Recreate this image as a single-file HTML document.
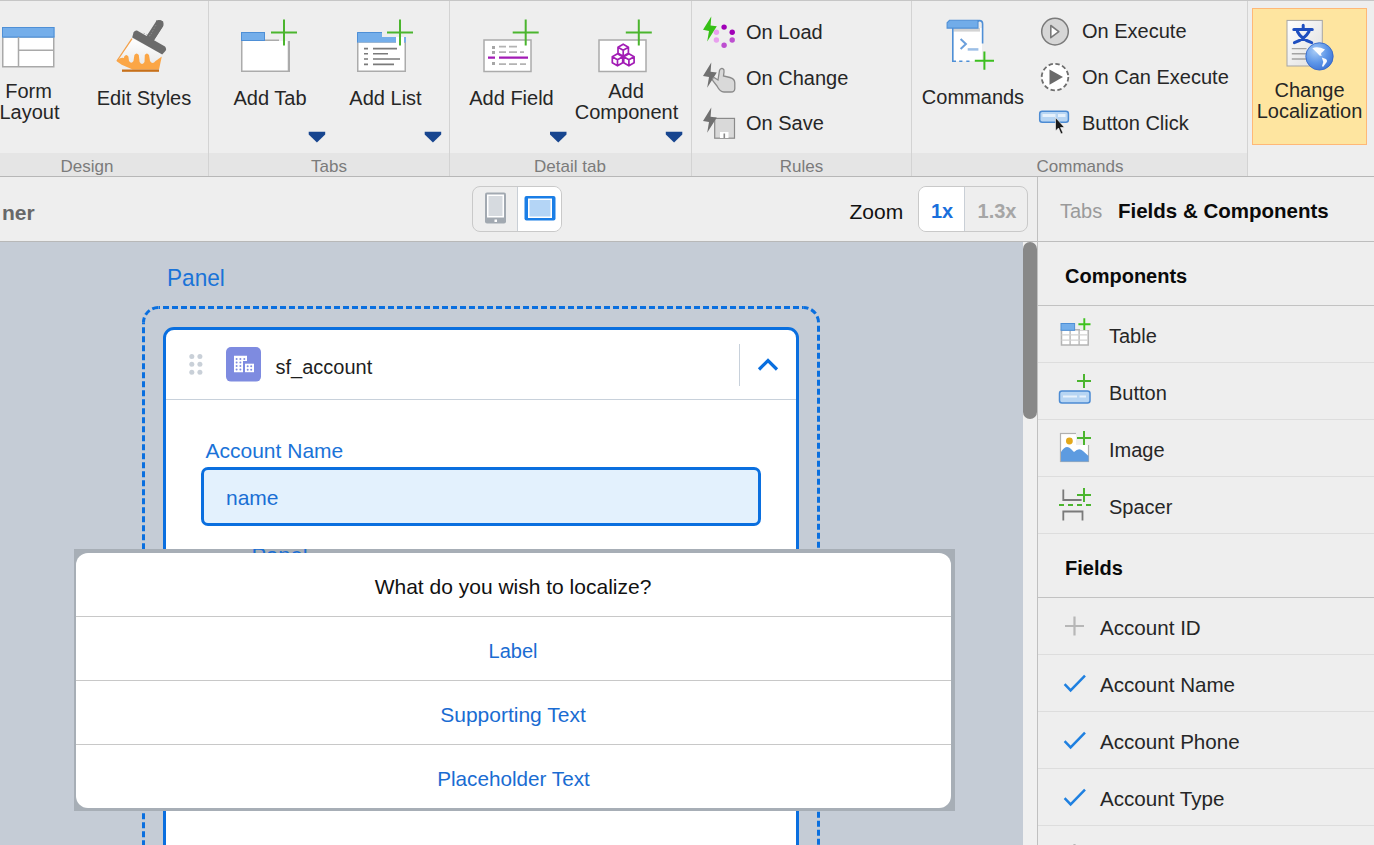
<!DOCTYPE html>
<html><head><meta charset="utf-8">
<style>
*{margin:0;padding:0;box-sizing:border-box;}
html,body{width:1374px;height:845px;overflow:hidden;background:#eeeeee;font-family:"Liberation Sans",sans-serif;position:relative;}
.a{position:absolute;}
.t{position:absolute;white-space:nowrap;}
svg{position:absolute;overflow:visible;}
</style></head><body>
<div class="a" style="left:0px;top:0px;width:1374px;height:177px;background:#eeeeee;"></div>
<div class="a" style="left:0px;top:0px;width:1374px;height:1px;background:#c6c6c6;"></div>
<div class="a" style="left:0px;top:153px;width:1247px;height:23px;background:#e5e5e5;"></div>
<div class="a" style="left:0px;top:176px;width:1374px;height:1px;background:#b7b7b7;"></div>
<div class="a" style="left:208px;top:1px;width:1px;height:175px;background:#d3d3d3;"></div>
<div class="a" style="left:449px;top:1px;width:1px;height:175px;background:#d3d3d3;"></div>
<div class="a" style="left:691px;top:1px;width:1px;height:175px;background:#d3d3d3;"></div>
<div class="a" style="left:911px;top:1px;width:1px;height:175px;background:#d3d3d3;"></div>
<div class="a" style="left:1247px;top:1px;width:1px;height:175px;background:#d3d3d3;"></div>
<div class="a" style="left:1252px;top:8px;width:115px;height:137px;background:#fee5a0;border:1px solid #ffb877;"></div>
<div class="t" style="left:28.5px;transform:translateX(-50%);top:81.1px;font-size:20px;line-height:20px;color:#262626;">Form</div>
<div class="t" style="left:29.5px;transform:translateX(-50%);top:102.1px;font-size:20px;line-height:20px;color:#262626;">Layout</div>
<div class="t" style="left:144.0px;transform:translateX(-50%);top:88.1px;font-size:20px;line-height:20px;color:#262626;">Edit Styles</div>
<div class="t" style="left:270.0px;transform:translateX(-50%);top:88.1px;font-size:20px;line-height:20px;color:#262626;">Add Tab</div>
<div class="t" style="left:385.5px;transform:translateX(-50%);top:88.1px;font-size:20px;line-height:20px;color:#262626;">Add List</div>
<div class="t" style="left:511.5px;transform:translateX(-50%);top:88.1px;font-size:20px;line-height:20px;color:#262626;">Add Field</div>
<div class="t" style="left:626.0px;transform:translateX(-50%);top:81.1px;font-size:20px;line-height:20px;color:#262626;">Add</div>
<div class="t" style="left:626.5px;transform:translateX(-50%);top:102.1px;font-size:20px;line-height:20px;color:#262626;">Component</div>
<div class="t" style="left:746.0px;top:22.1px;font-size:20px;line-height:20px;color:#262626;">On Load</div>
<div class="t" style="left:746.0px;top:68.1px;font-size:20px;line-height:20px;color:#262626;">On Change</div>
<div class="t" style="left:746.0px;top:113.1px;font-size:20px;line-height:20px;color:#262626;">On Save</div>
<div class="t" style="left:973.0px;transform:translateX(-50%);top:87.1px;font-size:20px;line-height:20px;color:#262626;">Commands</div>
<div class="t" style="left:1082.0px;top:21.1px;font-size:20px;line-height:20px;color:#262626;">On Execute</div>
<div class="t" style="left:1082.0px;top:67.1px;font-size:20px;line-height:20px;color:#262626;">On Can Execute</div>
<div class="t" style="left:1082.0px;top:112.6px;font-size:20px;line-height:20px;color:#262626;">Button Click</div>
<div class="t" style="left:1309.5px;transform:translateX(-50%);top:80.1px;font-size:20px;line-height:20px;color:#262626;">Change</div>
<div class="t" style="left:1309.5px;transform:translateX(-50%);top:101.1px;font-size:20px;line-height:20px;color:#262626;">Localization</div>
<div class="t" style="left:87.0px;transform:translateX(-50%);top:157.6px;font-size:17px;line-height:17px;color:#7b7b7b;">Design</div>
<div class="t" style="left:329.0px;transform:translateX(-50%);top:157.6px;font-size:17px;line-height:17px;color:#7b7b7b;">Tabs</div>
<div class="t" style="left:570.0px;transform:translateX(-50%);top:157.6px;font-size:17px;line-height:17px;color:#7b7b7b;">Detail tab</div>
<div class="t" style="left:801.5px;transform:translateX(-50%);top:157.6px;font-size:17px;line-height:17px;color:#7b7b7b;">Rules</div>
<div class="t" style="left:1080.0px;transform:translateX(-50%);top:157.6px;font-size:17px;line-height:17px;color:#7b7b7b;">Commands</div>
<svg style="left:0;top:0" width="1374" height="177" viewBox="0 0 1374 177"><rect x="2.75" y="37" width="51" height="29.75" fill="#fff" stroke="#a9a9a9" stroke-width="1.5"/><rect x="2" y="27" width="52.5" height="10.5" fill="#74aeea"/><rect x="2.5" y="27.5" width="51.5" height="9.5" fill="none" stroke="#4e8fd6" stroke-width="1"/><path d="M18.5 37V66.5M18.5 50.25H54" stroke="#a9a9a9" stroke-width="1.5"/><defs><linearGradient id="bg1" x1="0" y1="0" x2="0" y2="1"><stop offset="0" stop-color="#ffffff"/><stop offset="1" stop-color="#e6e6e6"/></linearGradient></defs><path d="M132.4 38.4 L162.2 54.1 L161.8 57 L159 69.5 L132.7 69.5 L121.7 64.7 L116.7 61.2 Z" fill="url(#bg1)"/><path d="M116.7 61.2 L117.5 60 Q121 57 124 58 L124.2 56.6 Q126.3 53.5 128.4 56.6 L129 61 Q131.3 64.5 133.5 61 L134.4 55 Q136.6 51.8 138.8 55 L139.6 62 Q142 66 144.5 62 L144.8 55 Q146.9 51.8 149 55 L150 61 Q152.6 65 155.5 61 L157 60 L161.8 56.5 L159 69.5 L132.7 69.5 L121.7 64.7 Z" fill="#fba646"/><path d="M116.9 61 L132 38.6" stroke="#f3a04a" stroke-width="1.3"/><rect x="122" y="69.5" width="37" height="2.3" fill="#c7701a"/><path d="M159.7 20 Q164.5 21 163.2 26 L153.5 41 L146 37 Z" fill="#6b6b6b"/><path d="M156 20.5 Q159.7 19 163.2 21.5 L163.2 26 L153.5 41 L146 37 L156 21.5 Z" fill="#6b6b6b"/><path d="M137 30.5 L165 46.5 Q167 49 165.4 51 L162.2 54.6 L132.2 37.5 L133.5 32.5 Q135 30 137 30.5 Z" fill="#6b6b6b"/><path d="M156 25 L150 36 L143 33" stroke="#9a9a9a" stroke-width="0.7" stroke-dasharray="1.5 1.5" fill="none"/><rect x="241.75" y="40.25" width="47.5" height="31" fill="#fff" stroke="#ababab" stroke-width="1.5"/><rect x="241" y="32" width="24" height="9" fill="#74aeea"/><rect x="241.5" y="32.5" width="23" height="8" fill="none" stroke="#4e8fd6" stroke-width="1"/><rect x="265" y="38" width="25" height="3" fill="#eeeeee"/><path d="M265 40.25H279" stroke="#ababab" stroke-width="1.5"/><path d="M288.5 41V72" stroke="#ababab" stroke-width="1.5"/><path d="M271 32.6H297M284 19.6V45.6" stroke="#4bb52e" stroke-width="2" fill="none"/><rect x="357.75" y="42" width="47.5" height="29.25" fill="#fff" stroke="#ababab" stroke-width="1.5"/><rect x="357" y="32" width="25" height="10.5" fill="#74aeea"/><rect x="382" y="37" width="14" height="5.5" fill="#74aeea"/><rect x="396" y="37" width="8" height="6" fill="#ffffff"/><rect x="404" y="37" width="2" height="5.5" fill="#74aeea"/><path d="M357.5 42.5V32.5H382" stroke="#4e8fd6" stroke-width="1" fill="none"/><path d="M364 48.6H368M373 48.6H397" stroke="#7a7a7a" stroke-width="1.6"/><path d="M364 53.7H368M373 53.7H388" stroke="#7a7a7a" stroke-width="1.6"/><path d="M364 59H368M373 59H400" stroke="#7a7a7a" stroke-width="1.6"/><path d="M364 64.4H368M373 64.4H394" stroke="#7a7a7a" stroke-width="1.6"/><path d="M387 32.6H413M400 19.6V45.6" stroke="#4bb52e" stroke-width="2" fill="none"/><rect x="484" y="40" width="47" height="31.5" fill="#fff" stroke="#ababab" stroke-width="1.5"/><rect x="492" y="46" width="3" height="3" fill="#a6a6a6"/><rect x="492" y="51" width="3" height="3" fill="#a6a6a6"/><rect x="492" y="62" width="3" height="3" fill="#a6a6a6"/><path d="M499 46.7H506M509 46.7H517M499 52.2H506M509 52.2H517M520 52.2H524M499 64.2H506M509 64.2H517M520 64.2H526" stroke="#b3b3b3" stroke-width="1.8"/><path d="M488 57.6H495M499 57.6H528" stroke="#a21cb5" stroke-width="2.2"/><path d="M512.7 32.6H538.7M525.7 19.6V45.6" stroke="#4bb52e" stroke-width="2" fill="none"/><rect x="599" y="40" width="47" height="31.5" fill="#fff" stroke="#ababab" stroke-width="1.5"/><path d="M618.0 47.2 l5.2 -3 l5.2 3 v6 l-5.2 3 l-5.2 -3 Z M618.0 47.2 l5.2 3 l5.2 -3 M623.2 50.2 v6" stroke="#a21cb5" stroke-width="1.7" fill="none" stroke-linejoin="round"/><path d="M612.3 56.8 l5.2 -3 l5.2 3 v6 l-5.2 3 l-5.2 -3 Z M612.3 56.8 l5.2 3 l5.2 -3 M617.5 59.8 v6" stroke="#a21cb5" stroke-width="1.7" fill="none" stroke-linejoin="round"/><path d="M623.6999999999999 56.8 l5.2 -3 l5.2 3 v6 l-5.2 3 l-5.2 -3 Z M623.6999999999999 56.8 l5.2 3 l5.2 -3 M628.9 59.8 v6" stroke="#a21cb5" stroke-width="1.7" fill="none" stroke-linejoin="round"/><path d="M625.8 32.6H651.8M638.8 19.6V45.6" stroke="#4bb52e" stroke-width="2" fill="none"/><path d="M308.7 131.7H325.2V134.6L316.95 142.4L308.7 134.6Z" fill="#17458f"/><path d="M424.7 131.7H441.2V134.6L432.95 142.4L424.7 134.6Z" fill="#17458f"/><path d="M550 131.7H566.5V134.6L558.25 142.4L550 134.6Z" fill="#17458f"/><path d="M665.8 131.7H682.3V134.6L674.05 142.4L665.8 134.6Z" fill="#17458f"/><path d="M711.3 16.4 L703 29.8 L709 30.9 L707.2 41.6 L716.8 26.3 L710.6 25.6 Z" fill="#36c016"/><circle cx="724.1" cy="27.1" r="2.7" fill="#a100b8"/><circle cx="732.2" cy="32.3" r="2.7" fill="#a100b8"/><circle cx="732.2" cy="40.0" r="2.7" fill="#bd4fd0"/><circle cx="724.1" cy="45.2" r="2.7" fill="#bd4fd0"/><circle cx="716.4" cy="40.0" r="2.7" fill="#e8a0ee"/><circle cx="716.4" cy="32.3" r="2.7" fill="#e8a0ee"/><path d="M711.3 62.5 L703 75.9 L709 77 L707.2 87.7 L716.8 72.4 L710.6 71.7 Z" fill="#707070"/><path d="M717 86 L713 81 Q711.5 78.5 714 77.5 L718 80 L719.5 70.5 Q720.5 67.8 722.8 68.7 Q724.5 69.5 724 72 L723.5 76 L730 77.5 Q734.8 78.8 734.8 83 L734.8 88.5 Q734.8 92 731 92 L724 92 Q720 92 717 86 Z" fill="#d9d9d9" stroke="#8a8a8a" stroke-width="1.3"/><rect x="714.7" y="118.4" width="19.8" height="19.8" fill="#d9d9d9" stroke="#8a8a8a" stroke-width="1.2"/><rect x="720" y="132" width="8.5" height="6" fill="#fff"/><rect x="723.5" y="133.5" width="1.6" height="4.5" fill="#8a8a8a"/><path d="M711.3 107.5 L703 120.9 L709 122 L707.2 132.7 L716.8 117.4 L710.6 116.7 Z" fill="#707070"/><rect x="953.5" y="28" width="28.5" height="33" fill="#fff"/><rect x="953.5" y="28" width="26.5" height="3.6" fill="#d3d3d3"/><path d="M952.8 28V61.2H956" stroke="#4f8fd6" stroke-width="1.6" fill="none"/><path d="M959.2 61.2H962.4M966.3 61.2H969.5" stroke="#4f8fd6" stroke-width="1.6"/><path d="M976.5 28 V24 Q976.5 20.6 979.5 20.6 Q982.6 20.6 982.6 24 V43.4" stroke="#4f8fd6" stroke-width="1.6" fill="none"/><path d="M949.5 20.3 H978 V28.1 H947.1 V22.8 Z" fill="#71ace9" stroke="#4f8fd6" stroke-width="1.1"/><path d="M960.6 39.1 L965.9 44.1 L960.6 49.1" stroke="#6a9fdc" stroke-width="2" fill="none"/><path d="M967.7 49.4 H978.4" stroke="#9cbfe6" stroke-width="2.5"/><path d="M974.8 60.8H994M984.4 51.6V69.7" stroke="#3cbf1f" stroke-width="2"/><circle cx="1055" cy="31.6" r="13.3" fill="#d6d6d6" stroke="#7a7a7a" stroke-width="1.5"/><path d="M1050.8 25.5 L1058.8 31.6 L1050.8 37.7 Z" fill="#fff" stroke="#7a7a7a" stroke-width="1.6" stroke-linejoin="round"/><circle cx="1055" cy="77.1" r="13.3" fill="#fff" stroke="#6e6e6e" stroke-width="1.8" stroke-dasharray="4.4 2.56"/><path d="M1049.5 69.5 L1063 77.1 L1049.5 84.7 Z" fill="#6a6a6a"/><rect x="1039.7" y="111.2" width="28.7" height="11" rx="2.5" fill="#b7d5f3" stroke="#4c8bd3" stroke-width="1.5"/><path d="M1042.5 115.5H1055.5M1058 115.5H1065.5" stroke="#e6f1fc" stroke-width="3"/><path d="M1055.5 117.5 L1055.5 131 L1058.5 128 L1061 134 L1063 133 L1060.5 127.5 L1064.5 127.5 Z" fill="#1a1a1a" stroke="#fff" stroke-width="0.6"/><defs><linearGradient id="docg" x1="0" y1="0" x2="1" y2="1"><stop offset="0" stop-color="#ffffff"/><stop offset="1" stop-color="#dedede"/></linearGradient><radialGradient id="glob" cx="0.35" cy="0.3" r="0.8"><stop offset="0" stop-color="#a9ccf6"/><stop offset="0.55" stop-color="#5d96e8"/><stop offset="1" stop-color="#3a70d4"/></radialGradient></defs><rect x="1287" y="20.4" width="35.3" height="45.6" fill="url(#docg)" stroke="#a5a5a5" stroke-width="1"/><path d="M1303.2 25.3V28.6M1293.8 29.5H1312.3M1297.4 31.5 Q1301 39 1311.7 42.7M1309 31.5 Q1305 39 1294.4 42.7" stroke="#1f4fc0" stroke-width="3" fill="none" stroke-linecap="round"/><path d="M1291.8 48.6H1306.5M1291.8 53.8H1306.5M1291.8 59H1306.5" stroke="#a3a3a3" stroke-width="1.4"/><circle cx="1319.5" cy="56.4" r="13.7" fill="url(#glob)" stroke="#2d62c8" stroke-width="0.8"/><path d="M1312.3 48.2 Q1318 46 1325 49.5 L1322.5 52 Q1320 53 1321.8 56 L1319.5 55.5 Q1316 51.5 1312.3 48.2 Z" fill="#fff" opacity="0.95"/><path d="M1321.8 57.5 L1326 59 Q1328 61 1326 63 L1323 67 L1322 66 L1323.3 62 Z" fill="#fff" opacity="0.95"/></svg>
<div class="a" style="left:0px;top:177px;width:1037px;height:64px;background:#eeeeee;"></div>
<div class="a" style="left:0px;top:241px;width:1037px;height:1px;background:#b8b8b8;"></div>
<div class="t" style="left:2.0px;top:202.2px;font-size:21px;line-height:21px;color:#686868;font-weight:bold;">ner</div>
<div class="a" style="left:472px;top:186px;width:90px;height:46px;border:1px solid #c9c9c9;border-radius:8px;background:#eeeeee;overflow:hidden;"><div class="a" style="left:44px;top:0;width:45px;height:44px;background:#fff;border-left:1px solid #c9cfd6;"></div></div>
<svg style="left:0;top:0" width="1374" height="845" viewBox="0 0 1374 845"><rect x="485" y="192.5" width="21" height="31" rx="2" fill="#a2a9b1"/><rect x="487" y="194.5" width="17" height="23" fill="#fff"/><rect x="488.5" y="196" width="14" height="20" fill="#d6dadf"/><rect x="494.5" y="219.5" width="2.5" height="2.5" fill="#fff"/><rect x="524.5" y="196" width="31" height="24.5" rx="2" fill="#1a7ee6"/><rect x="528" y="198.5" width="24" height="19.5" fill="#fff"/><rect x="529.5" y="200" width="21" height="16.5" fill="#b4d5f6"/></svg>
<div class="t" style="left:849.5px;top:200.7px;font-size:21px;line-height:21px;color:#111111;">Zoom</div>
<div class="a" style="left:918px;top:186px;width:110px;height:46px;border:1px solid #c9c9c9;border-radius:8px;background:#eeeeee;overflow:hidden;"><div class="a" style="left:0;top:0;width:46px;height:44px;background:#fff;border-right:1px solid #c9cfd6;"></div></div>
<div class="t" style="left:942.0px;transform:translateX(-50%);top:201.1px;font-size:20px;line-height:20px;color:#1a6fdc;font-weight:bold;">1x</div>
<div class="t" style="left:997.0px;transform:translateX(-50%);top:201.1px;font-size:20px;line-height:20px;color:#a6a6a6;font-weight:bold;">1.3x</div>
<div class="a" style="left:0px;top:242px;width:1023px;height:603px;background:#c5ccd6;"></div>
<div class="t" style="left:167.3px;top:265.7px;font-size:24.3px;line-height:24.3px;color:#1a73d8;transform:scaleX(0.93);transform-origin:0 0;">Panel</div>
<svg style="left:0;top:0" width="1374" height="845" viewBox="0 0 1374 845"><path d="M158.5 307.5H803.5" fill="none" stroke="#0a6fdf" stroke-width="3" stroke-dasharray="6 3" stroke-dashoffset="4.5"/><path d="M818.5 322.5V1000" fill="none" stroke="#0a6fdf" stroke-width="3" stroke-dasharray="6 3" stroke-dashoffset="5.8"/><path d="M143.5 322.5V1000" fill="none" stroke="#0a6fdf" stroke-width="3" stroke-dasharray="6 3" stroke-dashoffset="4.3"/><path d="M143.5 322.5A15 15 0 0 1 158.5 307.5" fill="none" stroke="#0a6fdf" stroke-width="3" stroke-dasharray="6 3" stroke-dashoffset="1"/><path d="M803.5 307.5A15 15 0 0 1 818.5 322.5" fill="none" stroke="#0a6fdf" stroke-width="3" stroke-dasharray="6 3" stroke-dashoffset="1"/></svg>
<div class="a" style="left:163px;top:327px;width:636px;height:600px;background:#fff;border:3px solid #0a6fdf;border-radius:11px;"></div>
<div class="a" style="left:166px;top:399px;width:630px;height:1px;background:#c8d1db;"></div>
<div class="a" style="left:739px;top:344px;width:1px;height:42px;background:#c8d1db;"></div>
<svg style="left:0;top:0" width="1374" height="845" viewBox="0 0 1374 845"><circle cx="191.8" cy="356.5" r="2.5" fill="#c9d0d8"/><circle cx="191.8" cy="364.3" r="2.5" fill="#c9d0d8"/><circle cx="191.8" cy="372.2" r="2.5" fill="#c9d0d8"/><circle cx="199.9" cy="356.5" r="2.5" fill="#c9d0d8"/><circle cx="199.9" cy="364.3" r="2.5" fill="#c9d0d8"/><circle cx="199.9" cy="372.2" r="2.5" fill="#c9d0d8"/><rect x="226" y="347" width="35" height="34.6" rx="5" fill="#7e8be0"/><path d="M234 355.8H247V361H243V372.2H234Z" fill="#fff"/><rect x="245" y="363.7" width="9" height="8.5" fill="#fff"/><circle cx="236.6" cy="358.9" r="1" fill="#7f8ce0"/><circle cx="240.4" cy="358.9" r="1" fill="#7f8ce0"/><circle cx="244.3" cy="358.9" r="1" fill="#7f8ce0"/><circle cx="236.6" cy="362.5" r="1" fill="#7f8ce0"/><circle cx="240.4" cy="362.5" r="1" fill="#7f8ce0"/><circle cx="236.6" cy="366" r="1" fill="#7f8ce0"/><circle cx="240.4" cy="366" r="1" fill="#7f8ce0"/><circle cx="236.6" cy="369.6" r="1" fill="#7f8ce0"/><circle cx="240.4" cy="369.6" r="1" fill="#7f8ce0"/><circle cx="247.7" cy="366.2" r="1" fill="#7f8ce0"/><circle cx="251.2" cy="366.2" r="1" fill="#7f8ce0"/><circle cx="247.7" cy="369.8" r="1" fill="#7f8ce0"/><circle cx="251.2" cy="369.8" r="1" fill="#7f8ce0"/><path d="M759 369.5 L768 360.5 L777 369.5" stroke="#0a6fdf" stroke-width="3.2" fill="none"/></svg>
<div class="t" style="left:275.5px;top:357.1px;font-size:20px;line-height:20px;color:#1e1e1e;">sf_account</div>
<div class="t" style="left:205.5px;top:440.2px;font-size:21px;line-height:21px;color:#1a73d8;">Account Name</div>
<div class="a" style="left:201px;top:467px;width:560px;height:59px;background:#e3f1fd;border:3px solid #0a6fdf;border-radius:7px;"></div>
<div class="t" style="left:226.0px;top:487.2px;font-size:21px;line-height:21px;color:#1a6fd4;">name</div>
<div class="a" style="left:74px;top:549px;width:881px;height:262px;background:#a7aeb6;"></div>
<div class="a" style="left:74px;top:549px;width:881px;height:4px;overflow:hidden;"><div class="t" style="left:177.4px;top:-4.4px;font-size:22px;line-height:22px;color:#1a6fd4;">Panel</div>
</div>
<div class="a" style="left:76px;top:553px;width:875px;height:255px;background:#fff;border-radius:12px;"></div>
<div class="a" style="left:76px;top:616px;width:875px;height:1px;background:#c8c8c8;"></div>
<div class="a" style="left:76px;top:680px;width:875px;height:1px;background:#c8c8c8;"></div>
<div class="a" style="left:76px;top:744px;width:875px;height:1px;background:#c8c8c8;"></div>
<div class="t" style="left:513.0px;transform:translateX(-50%);top:576.2px;font-size:21px;line-height:21px;color:#111111;">What do you wish to localize?</div>
<div class="t" style="left:513.0px;transform:translateX(-50%);top:641.1px;font-size:20px;line-height:20px;color:#1a6cd2;">Label</div>
<div class="t" style="left:513.0px;transform:translateX(-50%);top:704.2px;font-size:21px;line-height:21px;color:#1a6cd2;">Supporting Text</div>
<div class="t" style="left:513.5px;transform:translateX(-50%);top:768.5px;font-size:20.7px;line-height:20.7px;color:#1a6cd2;">Placeholder Text</div>
<div class="a" style="left:1023px;top:242px;width:14px;height:603px;background:#f0f0f0;"></div>
<div class="a" style="left:1023px;top:242px;width:14px;height:177px;background:#888888;border-radius:7px;"></div>
<div class="a" style="left:1037px;top:177px;width:1px;height:668px;background:#c0c0c0;"></div>
<div class="a" style="left:1038px;top:177px;width:336px;height:668px;background:#eeeeee;"></div>
<div class="a" style="left:1038px;top:241px;width:336px;height:1px;background:#bdbdbd;"></div>
<div class="t" style="left:1060.0px;top:201.1px;font-size:20px;line-height:20px;color:#9a9a9a;">Tabs</div>
<div class="t" style="left:1118.0px;top:200.6px;font-size:20.5px;line-height:20.5px;color:#0a0a0a;font-weight:bold;">Fields &amp; Components</div>
<div class="t" style="left:1065.0px;top:266.1px;font-size:20px;line-height:20px;color:#0a0a0a;font-weight:bold;">Components</div>
<div class="a" style="left:1038px;top:305px;width:336px;height:1px;background:#c2c2c2;"></div>
<div class="t" style="left:1109.0px;top:326.1px;font-size:20px;line-height:20px;color:#262626;">Table</div>
<div class="a" style="left:1038px;top:362px;width:336px;height:1px;background:#dddddd;"></div>
<div class="t" style="left:1109.0px;top:383.1px;font-size:20px;line-height:20px;color:#262626;">Button</div>
<div class="a" style="left:1038px;top:419px;width:336px;height:1px;background:#dddddd;"></div>
<div class="t" style="left:1109.0px;top:440.1px;font-size:20px;line-height:20px;color:#262626;">Image</div>
<div class="a" style="left:1038px;top:476px;width:336px;height:1px;background:#dddddd;"></div>
<div class="t" style="left:1109.0px;top:497.1px;font-size:20px;line-height:20px;color:#262626;">Spacer</div>
<div class="a" style="left:1038px;top:533px;width:336px;height:1px;background:#dddddd;"></div>
<div class="t" style="left:1065.0px;top:558.1px;font-size:20px;line-height:20px;color:#0a0a0a;font-weight:bold;">Fields</div>
<div class="a" style="left:1038px;top:597px;width:336px;height:1px;background:#c2c2c2;"></div>
<div class="t" style="left:1100.0px;top:617.6px;font-size:20.6px;line-height:20.6px;color:#262626;">Account ID</div>
<div class="a" style="left:1038px;top:654px;width:336px;height:1px;background:#dddddd;"></div>
<div class="t" style="left:1100.0px;top:674.6px;font-size:20.6px;line-height:20.6px;color:#262626;">Account Name</div>
<div class="a" style="left:1038px;top:711px;width:336px;height:1px;background:#dddddd;"></div>
<div class="t" style="left:1100.0px;top:731.6px;font-size:20.6px;line-height:20.6px;color:#262626;">Account Phone</div>
<div class="a" style="left:1038px;top:768px;width:336px;height:1px;background:#dddddd;"></div>
<div class="t" style="left:1100.0px;top:788.6px;font-size:20.6px;line-height:20.6px;color:#262626;">Account Type</div>
<div class="a" style="left:1038px;top:825px;width:336px;height:1px;background:#dddddd;"></div>
<svg style="left:0;top:0" width="1374" height="845" viewBox="0 0 1374 845"><rect x="1061.5" y="329.8" width="26.7" height="15.2" fill="#fff" stroke="#b3b3b3" stroke-width="1.5"/><path d="M1070.1 330V345M1079.1 330V345" stroke="#b3b3b3" stroke-width="1.3"/><path d="M1061.5 334.8H1088M1061.5 340.2H1088" stroke="#d2d2d2" stroke-width="1.2"/><rect x="1061" y="323.5" width="13.6" height="6.8" fill="#74aeea" stroke="#4e8fd6" stroke-width="1"/><rect x="1080" y="327" width="9" height="3" fill="#eeeeee"/><path d="M1078.4 324.2H1090.5M1084.3 318.3V330.1" stroke="#3ec21f" stroke-width="1.9"/><rect x="1059.5" y="391" width="30.5" height="12" rx="2.5" fill="#b7d5f3" stroke="#4c8bd3" stroke-width="1.5"/><path d="M1063 396.5H1077M1079.5 396.5H1086" stroke="#e8f2fc" stroke-width="2.2"/><path d="M1077 381H1091M1084 374V388" stroke="#4bb52e" stroke-width="2"/><rect x="1060.5" y="433.5" width="28" height="28" fill="#fff" stroke="#b0b0b0" stroke-width="1.2"/><path d="M1061 461.5 L1061 452 Q1066 444 1071 449 L1074 452 Q1079 447 1083 451 L1088.5 456 V461.5 Z" fill="#5d9be0"/><circle cx="1069.4" cy="441" r="3.4" fill="#e3a81b"/><rect x="1076" y="431" width="14" height="14" fill="#eeeeee"/><path d="M1077 438H1091M1084 431V445" stroke="#4bb52e" stroke-width="2"/><path d="M1063.3 489.5V500H1081.6" stroke="#7a7a7a" stroke-width="1.8" fill="none"/><path d="M1063.3 520.5V511.5H1082.5V520.5" stroke="#7a7a7a" stroke-width="1.8" fill="none"/><path d="M1059 505H1091" stroke="#4bb52e" stroke-width="1.8" stroke-dasharray="5 4"/><path d="M1077 495H1091M1084 488V502" stroke="#4bb52e" stroke-width="2"/><path d="M1065 626H1084M1074.5 616.5V635.5" stroke="#b7b7b7" stroke-width="2.2"/><path d="M1064.6 684.2 L1070.6 690.4 L1085 675.7" stroke="#1f80e0" stroke-width="2.5" fill="none"/><path d="M1064.6 741.2 L1070.6 747.4 L1085 732.7" stroke="#1f80e0" stroke-width="2.5" fill="none"/><path d="M1064.6 798.2 L1070.6 804.4 L1085 789.7" stroke="#1f80e0" stroke-width="2.5" fill="none"/><path d="M1074.5 844V864M1065 854H1084" stroke="#b7b7b7" stroke-width="2.2"/></svg>
</body></html>
